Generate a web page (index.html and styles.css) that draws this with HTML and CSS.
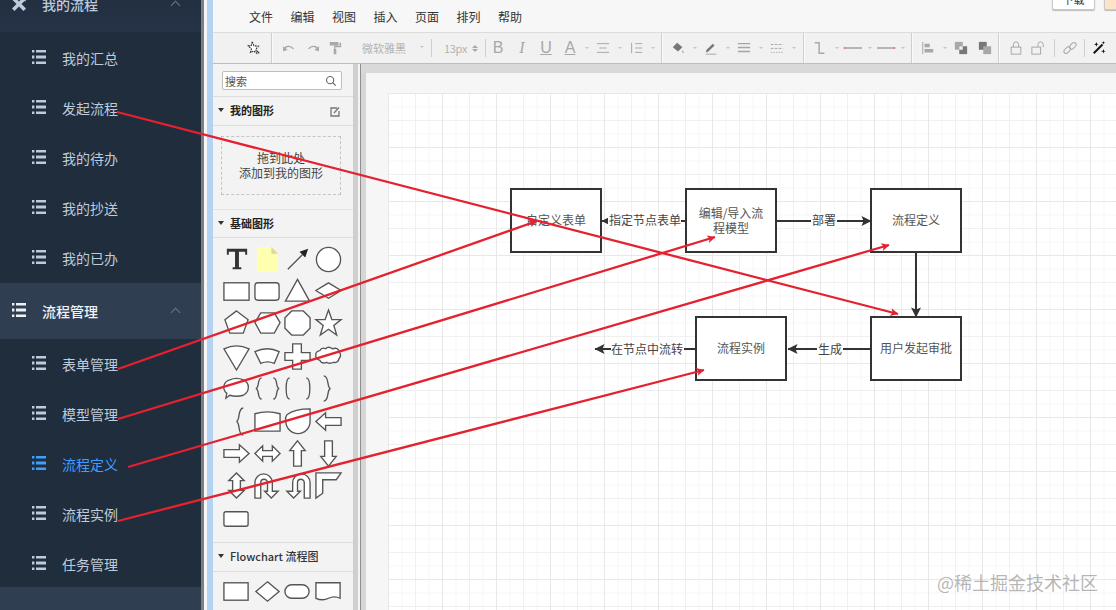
FILE: index.html
```html
<!DOCTYPE html>
<html lang="zh-CN">
<head>
<meta charset="utf-8">
<title>流程管理</title>
<link rel="stylesheet" href="styles.css">
</head>
<body>
<svg class="defs" width="0" height="0" aria-hidden="true">
  <symbol id="list" viewBox="0 0 14 14">
    <path d="M0 0h2.4v2.6H0zM0 5.6h2.4v2.8H0zM0 11.4h2.4V14H0zM4 0h10v2.6H4zM4 5.6h10v2.8H4zM4 11.4h10V14H4z"/>
  </symbol>
</svg>
<div class="app">
  <aside class="sidebar">
    <div class="group-title first">
      <svg class="tools-icon" viewBox="0 0 14 14"><path d="M0 2.500 2.500 0 7 4.500 10 1.500 9.500.5 11.500 0 14 2.500 13.500 4.500 12.500 4 9.500 7 14 11.500 11.500 14 7 9.500 2.500 14 0 11.500 4.500 7z"/></svg>
      <span>我的流程</span><i class="chev"></i>
    </div>
    <ul class="submenu">
      <li><svg class="list-icon"><use href="#list"/></svg><span>我的汇总</span></li>
      <li><svg class="list-icon"><use href="#list"/></svg><span>发起流程</span></li>
      <li><svg class="list-icon"><use href="#list"/></svg><span>我的待办</span></li>
      <li><svg class="list-icon"><use href="#list"/></svg><span>我的抄送</span></li>
      <li><svg class="list-icon"><use href="#list"/></svg><span>我的已办</span></li>
    </ul>
    <div class="group-title open">
      <svg class="list-icon"><use href="#list"/></svg>
      <span>流程管理</span><i class="chev"></i>
    </div>
    <ul class="submenu">
      <li><svg class="list-icon"><use href="#list"/></svg><span>表单管理</span></li>
      <li><svg class="list-icon"><use href="#list"/></svg><span>模型管理</span></li>
      <li class="active"><svg class="list-icon"><use href="#list"/></svg><span>流程定义</span></li>
      <li><svg class="list-icon"><use href="#list"/></svg><span>流程实例</span></li>
      <li><svg class="list-icon"><use href="#list"/></svg><span>任务管理</span></li>
    </ul>
    <div class="group-title tail"></div>
  </aside>
  <div class="edge"></div>
  <main class="editor">
    <header class="menubar">
      <nav class="menus"><span>文件</span><span>编辑</span><span>视图</span><span>插入</span><span>页面</span><span>排列</span><span>帮助</span></nav>
      <div class="actions"><button class="btn">下载</button><button class="btn accent"></button></div>
    </header>
    <div class="toolbar">
      <div class="tgroup g-select">
        <span class="tool w24"><svg viewBox="0 0 16 16"><path class="ink dashed" d="M6 1 8 5.500l5 .5-3 3.500 1 4.500-3.500-2.500L4 13l1-4L1.500 5.500 5 5z"/><path class="wand-tip" d="m11 11 3 3"/></svg></span>
      </div>
      <div class="tgroup g-text">
        <span class="tool w24"><svg viewBox="0 0 16 16"><path class="dim thick" d="M2 10c2-5 8-5 11-1"/><path class="fill" d="M1 6l.5 6 5-2z"/></svg></span>
        <span class="tool w24"><svg viewBox="0 0 16 16"><path class="dim thick" d="M14 10c-2-5-8-5-11-1"/><path class="fill" d="M15 6l-.5 6-5-2z"/></svg></span>
        <span class="tool w20"><svg viewBox="0 0 16 16"><path class="fill" d="M2 1h10v4H2zM13 2h2v5H8.500v2H7V5.500h6.500zM6.500 9h3v6h-3z"/></svg></span>
        <span class="select font-sel">微软雅黑<i class="caret"></i></span>
        <span class="thin"></span>
        <span class="select size-sel">13px<i class="spin"></i></span>
        <span class="thin"></span>
        <span class="tool w24 glyph b">B</span>
        <span class="tool w24 glyph it">I</span>
        <span class="tool w24 glyph un">U</span>
        <span class="tool w24 glyph un">A</span>
        <i class="caret c9"></i>
        <span class="tool w24"><svg viewBox="0 0 16 16"><path class="dim" d="M1 3h14M4 8h8M1 13h14"/></svg></span>
        <i class="caret c9"></i>
        <span class="tool w24"><svg viewBox="0 0 16 16"><path class="dim" d="M7 3h8M7 8h8M7 13h8M3 2v12"/></svg></span>
        <i class="caret c9"></i>
      </div>
      <div class="tgroup g-style">
        <span class="tool w24"><svg viewBox="0 0 16 16"><path class="fill dark" d="M2 7l5-5 6 5-5 5z"/><path class="fill" d="M13 10l2 3-2 1z"/></svg></span>
        <i class="caret c9"></i>
        <span class="tool w24"><svg viewBox="0 0 16 16"><path class="fill dark" d="M3 10l7-7 2 2-7 7-3 1z"/><path class="dim" d="M2 15h12"/></svg></span>
        <i class="caret c9"></i>
        <span class="tool w24"><svg viewBox="0 0 16 16"><path class="dim thick" d="M1 3h14M1 7.500h14M1 12h14"/></svg></span>
        <i class="caret c9"></i>
        <span class="tool w24"><svg viewBox="0 0 16 16"><path class="dim dash" d="M1 4h14M1 8.500h14"/><path class="dim dots" d="M1 13h14"/></svg></span>
        <i class="caret c9"></i>
      </div>
      <div class="tgroup g-line">
        <span class="tool w24"><svg viewBox="0 0 16 16"><path class="dim thick" d="M2 2h5v12h6"/></svg></span>
        <i class="caret c9"></i>
        <span class="tool w24"><svg class="wide" viewBox="0 0 20 16"><path class="dim thick" d="M1 8h18"/><circle class="pink" cx="1.500" cy="8" r="1"/></svg></span>
        <i class="caret c9"></i>
        <span class="tool w24"><svg class="wide" viewBox="0 0 20 16"><path class="dim thick" d="M1 8h18"/><circle class="pink" cx="18.500" cy="8" r="1"/></svg></span>
        <i class="caret c9"></i>
      </div>
      <div class="tgroup g-arrange">
        <span class="tool w24"><svg viewBox="0 0 16 16"><path class="dim" d="M2 1v14"/><path class="fill" d="M4 3h6v4H4zM4 9h10v4H4z"/></svg></span>
        <i class="caret c9"></i>
        <span class="tool w24"><svg viewBox="0 0 16 16"><rect class="fill" x="1" y="1" width="9" height="9"/><rect class="fill dark" x="6" y="6" width="9" height="9"/><rect class="hole" x="6" y="6" width="4" height="4"/></svg></span>
        <span class="tool w24"><svg viewBox="0 0 16 16"><rect class="fill dark" x="1" y="1" width="9" height="9"/><rect class="fill" x="6" y="6" width="9" height="9"/></svg></span>
      </div>
      <div class="tgroup g-lock">
        <span class="tool w22"><svg viewBox="0 0 16 16"><rect class="dim" x="2.500" y="7" width="11" height="8"/><path class="dim" d="M5 7V4a3 3 0 0 1 6 0v3"/></svg></span>
        <span class="tool w22"><svg viewBox="0 0 16 16"><rect class="dim" x="1" y="7" width="10" height="8"/><path class="dim" d="M8 7V4a3 3 0 0 1 6 0v3"/></svg></span>
        <span class="thin th-a"></span>
        <span class="tool w28"><svg viewBox="0 0 16 16"><rect class="dim" x="0.500" y="8" width="8.500" height="5" rx="2.500" transform="rotate(-45 4.750 10.500)"/><rect class="dim" x="7" y="3" width="8.500" height="5" rx="2.500" transform="rotate(-45 11.250 5.500)"/></svg></span>
        <span class="thin th-b"></span>
        <span class="tool w28"><svg viewBox="0 0 16 16"><path class="wand" d="M2 14 12 4"/><path class="star" d="M5 1l.7 2 2 .7-2 .7L5 6.500l-.7-2-2-.7 2-.7zM13 9l.7 2 2 .7-2 .7-.7 2-.7-2-2-.7 2-.7zM13 0l.5 1.500L15 2l-1.500.5L13 4l-.5-1.500L11 2l1.500-.5z"/></svg></span>
      </div>
    </div>
    <div class="workspace">
      <section class="panel">
        <div class="search"><span>搜索</span><svg viewBox="0 0 14 14"><circle cx="6" cy="6" r="4.200"/><path d="m9 9 3.500 3.500"/></svg></div>
        <div class="phead my"><i class="tri"></i><b>我的图形</b>
          <svg class="edit" viewBox="0 0 12 12"><path d="M8 2H2v8h8V5M5 7l5-5.500"/></svg></div>
        <div class="dropwrap"><div class="drop">拖到此处<br>添加到我的图形</div></div>
        <div class="phead basic"><i class="tri"></i><b>基础图形</b></div>
        <div class="shapes">
          <svg viewBox="0 0 30 30"><path class="t" d="M5 4h21v6h-2V7h-6.500v16H20v2h-9v-2h2.500V7H7v3H5z"/></svg>
          <svg viewBox="0 0 30 30"><path class="note" d="M4 2h15l7 7v19H4z"/><path class="fold" d="M19 2l7 7h-7z"/></svg>
          <svg viewBox="0 0 30 30"><path class="ln" d="M5 25 20 10"/><path class="solid" d="M26 4l-9 3 6 6z"/></svg>
          <svg viewBox="0 0 30 30"><circle cx="15" cy="15" r="12.500"/></svg>

          <svg viewBox="0 0 30 30"><rect x="2" y="6" width="26" height="18"/></svg>
          <svg viewBox="0 0 30 30"><rect x="2" y="6" width="25" height="18" rx="3"/></svg>
          <svg viewBox="0 0 30 30"><path d="M15 2.500 27.500 25h-25z"/></svg>
          <svg viewBox="0 0 30 30"><path d="M15 7 28 15 15 23 2 15z" transform="translate(0 -1)"/></svg>

          <svg viewBox="0 0 30 30"><path d="M15 2 27 11l-5 14H8L3 11z"/></svg>
          <svg viewBox="0 0 30 30"><path d="M8 4h14l6 10-6 11H8L2 14z"/></svg>
          <svg viewBox="0 0 30 30"><path d="M9 2h12l7 7v11l-7 7H9l-7-7V9z"/></svg>
          <svg viewBox="0 0 30 30"><path d="m15 1 3.500 10H28l-7.500 6 3 10-8.500-6-8.500 6 3-10L2 11h9.500z"/></svg>

          <svg viewBox="0 0 30 30"><path d="M2 7q13-6 26 0L15 29z"/></svg>
          <svg viewBox="0 0 30 30"><path d="M2 10q13-6 25 0l-5 12q-7-3-14 0z"/></svg>
          <svg viewBox="0 0 30 30"><path d="M10 2h9v9h9v8h-9v9h-9v-9H2v-8h8z"/></svg>
          <svg viewBox="0 0 30 30"><path d="M6 9q2-4 6-2 3-3 7 0 6-2 7 3 3 4 0 7-1 5-6 4-3 2-7 0-5 2-7-2-5-2-4-5-1-4 4-5z"/></svg>

          <svg viewBox="0 0 30 30"><path d="M8 6q7-3 14 0c7 3 7 12 0 16q-7 2-14 0l-4 3 1-5C0 16 1 8 8 6z"/></svg>
          <svg viewBox="0 0 30 30"><path class="ln" d="M9 4C4 4 7 14 3 15c4 1 1 11 6 11M21 4c5 0 2 10 6 11-4 1-1 11-6 11"/></svg>
          <svg viewBox="0 0 30 30"><path class="ln" d="M7 4C2 4 2 26 7 26M24 4c5 0 5 22 0 22"/></svg>
          <svg viewBox="0 0 30 30"><path class="ln" d="M10 2c6 0 3 12 7 13-4 1-1 13-7 13"/></svg>

          <svg viewBox="0 0 30 30"><path class="ln" d="M22 1c-6 0-3 13-7 14 4 1 1 14 7 14"/></svg>
          <svg viewBox="0 0 30 30"><path d="M2 7q13-4 26 0v18H2z"/></svg>
          <svg viewBox="0 0 30 30"><path d="M4 8q8-6 24-6v13a12 12 0 0 1-25 0q-1-4 1-7z"/></svg>
          <svg viewBox="0 0 30 30"><path d="M2 15 12 6v5h16v8H12v5z"/></svg>

          <svg viewBox="0 0 30 30"><path d="M28 15 18 6v5H2v8h16v5z"/></svg>
          <svg viewBox="0 0 30 30"><path d="M2 15 10 7v5h10V7l8 8-8 8v-5H10v5z"/></svg>
          <svg viewBox="0 0 30 30"><path d="M15 2l8 10h-4v16h-8V12H7z"/></svg>
          <svg viewBox="0 0 30 30"><path d="M15 28l8-10h-4V2h-8v16H7z"/></svg>

          <svg viewBox="0 0 30 30"><path d="M15 2l8 8h-4v10h4l-8 8-8-8h4V10H7z"/></svg>
          <svg viewBox="0 0 30 30"><path d="M2 28V12a9 9 0 0 1 18 0v9h6l-7 7-7-7h3v-9a3 3 0 0 0-7 0v16z"/></svg>
          <svg viewBox="0 0 30 30"><path d="M28 28V12a9 9 0 0 0-18 0v9H4l7 7 7-7h-3v-9a3 3 0 0 1 7 0v16z"/></svg>
          <svg viewBox="0 0 30 30"><path d="M2 28V2h26l-5 7H9v14z"/></svg>

          <svg viewBox="0 0 30 30"><rect x="2" y="8" width="25" height="15" rx="2"/></svg>
        </div>
        <div class="phead flow"><i class="tri"></i><span>Flowchart 流程图</span></div>
        <div class="shapes flowshapes">
          <svg viewBox="0 0 30 30"><rect x="2" y="6" width="25" height="18"/></svg>
          <svg viewBox="0 0 30 30"><path d="M15 5 27 15 15 25 3 15z"/></svg>
          <svg viewBox="0 0 30 30"><rect x="2" y="8" width="25" height="14" rx="7"/></svg>
          <svg viewBox="0 0 30 30"><path d="M2 6h25v16q-6-3-12 0t-13 0z"/></svg>
        </div>
      </section>
      <div class="pscroll"></div>
      <section class="canvas">
        <div class="band"></div>
        <div class="stage">
          <div class="paper"></div>
        </div>
      </section>
    </div>
  </main>
</div>

<svg class="diagram" viewBox="0 0 1116 610" width="1116" height="610">
  <defs>
    <marker id="dark-head" viewBox="0 0 10 10" refX="9.500" refY="5" markerWidth="14" markerHeight="10" markerUnits="userSpaceOnUse" orient="auto"><path d="M0 0 10 5 0 10 2 5z" fill="#333"/></marker>
    <marker id="red-head" viewBox="0 0 10 10" refX="9.500" refY="5" markerWidth="14" markerHeight="8" markerUnits="userSpaceOnUse" orient="auto"><path d="M0 0 10 5 0 10 2.500 5z" fill="#e3212f"/></marker>
  </defs>
  <g class="edges">
    <path d="M686 221H602" marker-end="url(#dark-head)"/>
    <path d="M776 221H871" marker-end="url(#dark-head)"/>
    <path d="M916 252V317" marker-end="url(#dark-head)"/>
    <path d="M871 349H788" marker-end="url(#dark-head)"/>
    <path d="M696 349H595" marker-end="url(#dark-head)"/>
  </g>
  <g class="labels">
    <rect x="608" y="213" width="73" height="16"/>
    <rect x="811" y="213" width="26" height="16"/>
    <rect x="817" y="341" width="26" height="16"/>
    <rect x="611" y="341" width="73" height="16"/>
  </g>
  <g class="nodes">
    <rect x="511" y="189" width="90" height="63"/>
    <rect x="686" y="189" width="90" height="63"/>
    <rect x="871" y="189" width="90" height="63"/>
    <rect x="871" y="317" width="90" height="63"/>
    <rect x="696" y="317" width="90" height="63"/>
  </g>
  <g class="ntext">
    <text x="556" y="225">自定义表单</text>
    <text x="731" y="218">编辑/导入流</text>
    <text x="731" y="233">程模型</text>
    <text x="916" y="225">流程定义</text>
    <text x="916" y="353">用户发起审批</text>
    <text x="741" y="353">流程实例</text>
  </g>
  <g class="ltext">
    <text x="645" y="225">指定节点表单</text>
    <text x="824" y="225">部署</text>
    <text x="830" y="354">生成</text>
    <text x="647" y="354">在节点中流转</text>
  </g>
  <g class="red">
    <path d="M117 112 898 314" marker-end="url(#red-head)"/>
    <path d="M118 369 537 221" marker-end="url(#red-head)"/>
    <path d="M118 419 715 237" marker-end="url(#red-head)"/>
    <path d="M128 467 889 245" marker-end="url(#red-head)"/>
    <path d="M118 521 704 370" marker-end="url(#red-head)"/>
  </g>
</svg>
<div class="watermark">@稀土掘金技术社区</div>
</body>
</html>
```
FILE: styles.css
```css
* { box-sizing: border-box; }
html, body { margin: 0; height: 100%; }
body {
  position: relative;
  width: 1116px;
  height: 610px;
  overflow: hidden;
  font-family: "Noto Sans CJK SC", "Liberation Sans", sans-serif;
  background: #f5f5f5;
  color: #333;
}
.defs { position: absolute; }
.app { display: flex; height: 610px; }

/* sidebar */
.sidebar {
  width: 201px;
  flex: none;
  height: 610px;
  overflow: hidden;
  background: #1f2d3d;
  color: #bfcbd9;
  font-size: 14px;
}
.group-title {
  display: flex;
  align-items: center;
  height: 56px;
  padding-left: 12px;
  background: #2b3a4e;
  position: relative;
  font-weight: 500;
}
.group-title.first { margin-top: -24px; background: linear-gradient(#1f2d3d, #263347); }
.group-title.open { background: #303e52; color: #f0f4f8; }
.group-title span { margin-left: 16px; }
.group-title.tail { margin-top: -2px; background: #303e52; }
.tools-icon { width: 14px; height: 14px; fill: #bfcbd9; }
.group-title .list-icon { fill: #eef2f6; margin-top: -2px; }
.chev {
  position: absolute;
  left: 172px;
  top: 26px;
  width: 7px;
  height: 7px;
  border-left: 1px solid #66768a;
  border-top: 1px solid #66768a;
  transform: rotate(45deg);
}
.submenu { list-style: none; margin: 0; padding: 1px 0 0; }
.group-title.open + .submenu { padding-top: 0; }
.submenu li {
  display: flex;
  align-items: center;
  height: 50px;
  padding-left: 32px;
  fill: #bfcbd9;
}
.submenu li span { margin-left: 16px; }
.submenu li.active { color: #409eff; fill: #409eff; }
.list-icon { width: 14px; height: 14px; flex: none; margin-top: -2px; }

.edge {
  width: 12px;
  flex: none;
  background: linear-gradient(90deg, #7d7f82 0 3px, #f6f6f6 3px 6px, #b4d3f3 6px 12px);
}

/* editor */
.editor { flex: 1; min-width: 0; display: flex; flex-direction: column; background: #f5f5f5; }
.menubar {
  height: 32px;
  flex: none;
  display: flex;
  justify-content: space-between;
  background: #f7f7f7;
  font-size: 12px;
  color: #333;
}
.menus { display: flex; gap: 17.500px; padding: 8px 0 0 36px; line-height: 17px; }
.actions { display: flex; gap: 9px; margin-top: -12px; height: 22px; margin-right: -31px; }
.btn {
  width: 43px;
  height: 22px;
  padding: 0;
  border: 1px solid #c9c9c9;
  border-radius: 2px;
  background: #fff;
  font: 11px "Noto Sans CJK SC", sans-serif;
  color: #333;
  box-shadow: 0 1px 1px #bbb;
}
.btn.accent { background: #fbe4c8; }

.toolbar {
  height: 32px;
  flex: none;
  display: flex;
  background: #f1f1f1;
  border-top: 1px solid #dcdcdc;
  border-bottom: 1px solid #bdbdbd;
}
.tgroup {
  display: flex;
  align-items: center;
  border-right: 1px solid #cfcfcf;
  box-shadow: 1px 0 0 #fbfbfb;
  flex: none;
  height: 100%;
}
.g-select { width: 59px; padding-left: 29px; }
.g-text { width: 390px; padding-left: 5px; }
.g-style { width: 142px; padding-left: 4px; }
.g-line { width: 108px; padding-left: 4px; }
.g-arrange { width: 87px; padding-left: 4px; }
.g-lock { flex: 1; padding-left: 6px; border-right: 0; box-shadow: none; }
.tool {
  display: flex;
  align-items: center;
  justify-content: center;
  flex: none;
  height: 24px;
}
.tool svg { width: 14px; height: 14px; overflow: visible; fill: none; }
.tool svg.wide { width: 20px; height: 16px; }
.w20 { width: 20px; }
.w22 { width: 22px; }
.w24 { width: 24px; }
.w28 { width: 28px; }
.ink { stroke: #333; stroke-width: 1.300; fill: #fff; }
.ink.dashed { stroke-dasharray: 2 1; }
.wand-tip { stroke: #333; stroke-width: 1.300; fill: none; }
.dim { stroke: #a6a6a6; stroke-width: 1.100; fill: none; }
.dim.thick { stroke-width: 1.600; }
.dim.dash { stroke-dasharray: 3 1.500; }
.dim.dots { stroke-dasharray: 1.500 1.500; }
.fill { fill: #a8a8a8; stroke: none; }
.fill.dark { fill: #777; }
.hole { fill: #f1f1f1; stroke: none; }
.pink { fill: #e77; }
.wand { stroke: #111; stroke-width: 2.200; fill: none; }
.star { fill: #111; }
.select {
  display: flex;
  align-items: center;
  flex: none;
  font-size: 11px;
  color: #b3b3b3;
  height: 24px;
}
.font-sel { width: 86px; padding-left: 17px; position: relative; }
.font-sel .caret { position: absolute; left: 75px; top: 10px; }
.size-sel { width: 53px; padding-left: 12px; letter-spacing: -.3px; position: relative; }
.spin {
  position: absolute;
  left: 40px;
  top: 7px;
  width: 0;
  height: 0;
  border: 3px solid transparent;
  border-top-color: #aaa;
  margin-top: 6px;
}
.spin::before {
  content: "";
  position: absolute;
  left: -3px;
  top: -10px;
  width: 0;
  height: 0;
  border: 3px solid transparent;
  border-bottom-color: #aaa;
}
.thin { width: 1px; height: 18px; background: #cfcfcf; flex: none; }
.th-a { margin: 0 1px 0 5px; height: 18px; }
.th-b { margin: 0; height: 18px; }
.caret {
  display: block;
  width: 4px;
  height: 4px;
  border: 2px solid transparent;
  border-top: 2px solid #c5c5c5;
  border-bottom: 0;
  flex: none;
}
.c9 { margin: 2px 2.500px 0; }
.glyph { color: #a8a8a8; font-family: "Liberation Sans", sans-serif; font-size: 16px; line-height: 1; }
.glyph.it { font-style: italic; font-family: "Liberation Serif", serif; }
.glyph.un { text-decoration: underline; }

/* workspace */
.workspace { flex: 1; min-height: 0; display: flex; }
.panel { width: 140px; flex: none; background: #f3f3f3; overflow: hidden; }
.pscroll {
  width: 7px;
  flex: none;
  background: linear-gradient(90deg, #cfcfcf 0 5px, #f4f4f4 5px);
}
.search {
  display: flex;
  align-items: center;
  justify-content: space-between;
  width: 120px;
  height: 19px;
  margin: 7px 0 6px 9px;
  padding: 0 4px 0 2px;
  background: #fff;
  border: 1px solid #bdbdbd;
  border-radius: 2px;
  font-size: 11px;
  color: #555;
}
.search svg { width: 12px; height: 12px; fill: none; stroke: #666; stroke-width: 1.300; }
.phead {
  display: flex;
  align-items: center;
  height: 30px;
  padding: 0 0 2px 5px;
  font-size: 11px;
  color: #222;
  background: #f3f3f3;
  border-top: 1px solid #dddddd;
  border-bottom: 1px solid #dddddd;
  position: relative;
}
.phead b { font-weight: 700; margin-left: 6px; }
.phead span { margin-left: 6px; font-weight: 500; color: #333; }
.phead.basic { height: 28px; border-top: 0; }
.phead.flow { height: 30px; margin-top: 7px; }
.tri {
  width: 0;
  height: 0;
  border: 3px solid transparent;
  border-top: 4px solid #333;
  margin-top: 3px;
  flex: none;
}
.edit { position: absolute; left: 116px; top: 9px; width: 12px; height: 12px; fill: none; stroke: #777; stroke-width: 1.300; }
.dropwrap { height: 84px; padding: 10px 0 0 8px; border-bottom: 1px solid #e3e3e3; }
.drop {
  width: 120px;
  height: 59px;
  border: 1px dashed #c4c4c4;
  text-align: center;
  font-size: 12px;
  line-height: 15px;
  padding-top: 13px;
  color: #444;
}
.shapes {
  display: grid;
  grid-template-columns: repeat(4, 30.750px);
  grid-auto-rows: 32.400px;
  justify-items: center;
  align-items: center;
  padding: 5px 0 0 8px;
  background: #f3f3f3;
}
.flowshapes { padding-top: 4px; }
.shapes svg { width: 29px; height: 29px; fill: #fff; stroke: #555; stroke-width: 1.400; overflow: visible; }
.shapes .ln { fill: none; }
.shapes .t { fill: #333; stroke: none; }
.shapes .note { fill: #ffffb0; stroke: none; }
.shapes .fold { fill: #d8d8a0; stroke: none; }
.shapes .solid { fill: #222; stroke: none; }

/* canvas */
.canvas {
  flex: 1;
  min-width: 0;
  border-left: 1px solid #8f8f8f;
  display: flex;
  flex-direction: column;
  background: #f6f6f6;
}
.band { height: 9px; background: #d9d9d9; flex: none; }
.stage {
  flex: 1;
  min-height: 0;
  padding: 20px 0 0 27px;
  border-left: 0;
  background: linear-gradient(90deg, #d6d6d6 0 5px, #f6f6f6 5px);
  overflow: hidden;
}
.paper {
  height: 100%;
  background-color: #fff;
  background-image:
    linear-gradient(#e8e8e8 1px, transparent 1px),
    linear-gradient(90deg, #e8e8e8 1px, transparent 1px),
    linear-gradient(#f0f0f0 1px, transparent 1px),
    linear-gradient(90deg, #f0f0f0 1px, transparent 1px),
    linear-gradient(#f7f7f7 1px, transparent 1px),
    linear-gradient(90deg, #f7f7f7 1px, transparent 1px);
  background-size: 54px 54px, 54px 54px, 27px 27px, 27px 27px, 13.500px 13.500px, 13.500px 13.500px;
}

/* overlay on the free canvas */
.diagram { position: absolute; left: 0; top: 0; pointer-events: none; font-family: "Noto Sans CJK SC", sans-serif; }
.edges path { fill: none; stroke: #333; stroke-width: 2; }
.labels rect { fill: #fff; }
.nodes rect { fill: #fff; stroke: #333; stroke-width: 2; }
.ntext text { font-size: 12px; fill: #555; text-anchor: middle; }
.ltext text { font-size: 12px; fill: #444; text-anchor: middle; }
.red path { fill: none; stroke: #e3212f; stroke-width: 2.300; }
.watermark {
  position: absolute;
  left: 937px;
  top: 569px;
  font-size: 18px;
  line-height: 26px;
  color: rgba(110, 110, 110, .5);
}
```
